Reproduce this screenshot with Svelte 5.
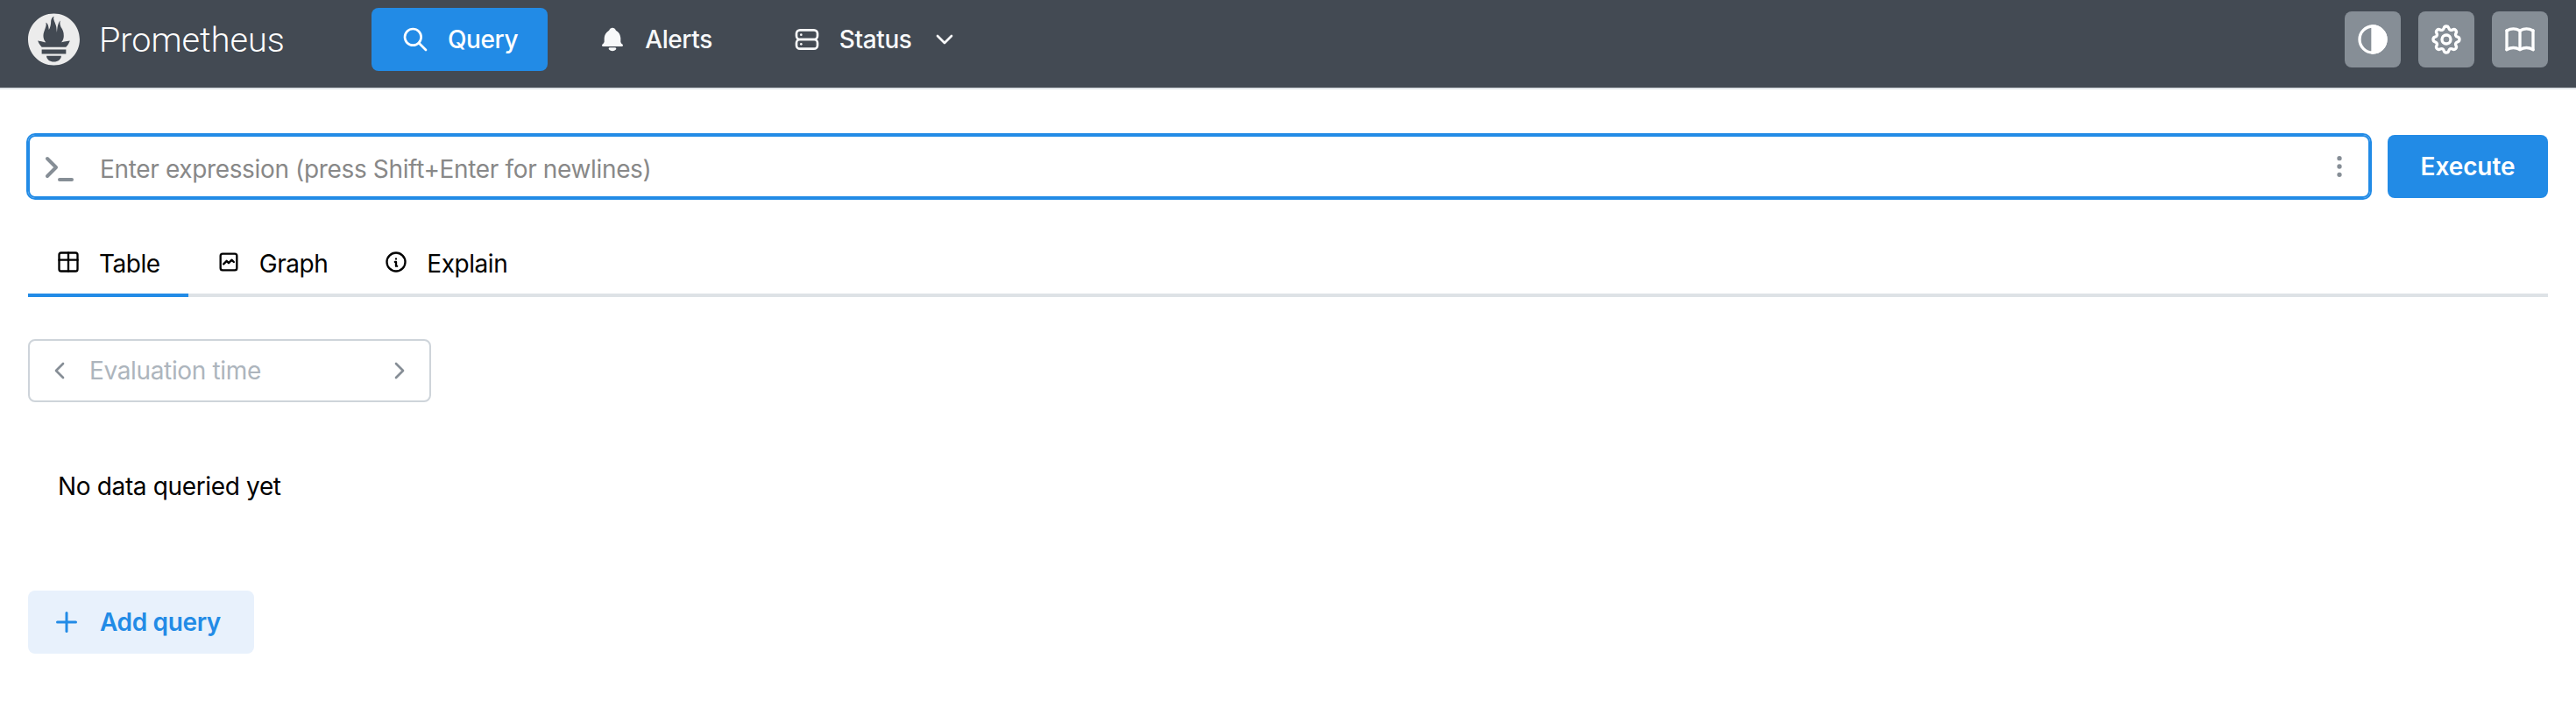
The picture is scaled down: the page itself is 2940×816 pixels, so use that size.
<script lang="ts">
    const tabs = [
        { label: 'Table', paths: ['M3 5a2 2 0 0 1 2 -2h14a2 2 0 0 1 2 2v14a2 2 0 0 1 -2 2h-14a2 2 0 0 1 -2 -2v-14z', 'M3 10h18', 'M12 3v18'] },
        { label: 'Graph', paths: ['M4 18v-12a2 2 0 0 1 2 -2h12a2 2 0 0 1 2 2v12a2 2 0 0 1 -2 2h-12a2 2 0 0 1 -2 -2z', 'M7 14l3 -3l2 2l3 -3l2 2'] },
        { label: 'Explain', paths: ['M3 12a9 9 0 1 0 18 0a9 9 0 0 0 -18 0', 'M12 9h.01', 'M11 12h1v4h1'] }
    ];
    const gear = 'M10.325 4.317c.426 -1.756 2.924 -1.756 3.35 0a1.724 1.724 0 0 0 2.573 1.066c1.543 -.94 3.31 .826 2.37 2.37a1.724 1.724 0 0 0 1.065 2.572c1.756 .426 1.756 2.924 0 3.35a1.724 1.724 0 0 0 -1.066 2.573c.94 1.543 -.826 3.31 -2.37 2.37a1.724 1.724 0 0 0 -2.572 1.065c-.426 1.756 -2.924 1.756 -3.35 0a1.724 1.724 0 0 0 -2.573 -1.066c-1.543 .94 -3.31 -.826 -2.37 -2.37a1.724 1.724 0 0 0 -1.065 -2.572c-1.756 -.426 -1.756 -2.924 0 -3.35a1.724 1.724 0 0 0 1.066 -2.573c-.94 -1.543 .826 -3.31 2.37 -2.37c1 .608 2.296 .07 2.572 -1.065z';
    const logo = 'M56.667.667C25.372.667 0 26.036 0 57.332c0 31.295 25.372 56.666 56.667 56.666s56.666-25.371 56.666-56.666C113.333 26.036 87.961.667 56.667.667zm0 106.055c-8.904 0-16.123-5.948-16.123-13.283H72.79c0 7.334-7.219 13.283-16.123 13.283zM83.297 89.04H30.034v-9.658h53.264v9.658zm-.191-14.629H30.186c-.176-.203-.356-.403-.526-.609-5.452-6.62-6.736-10.076-7.983-13.598-.021-.116 6.611 1.355 11.314 2.413 0 0 2.42.56 5.958 1.205-3.397-3.982-5.414-9.044-5.414-14.218 0-11.359 8.712-21.285 5.569-29.308 3.059.249 6.331 6.456 6.552 16.161 3.252-4.494 4.613-12.701 4.613-17.733 0-5.21 3.433-11.262 6.867-11.469-3.061 5.045.793 9.37 4.219 20.099 1.285 4.03 1.121 10.812 2.113 15.113.329-8.933 1.865-21.967 7.533-26.467-2.5 5.667.37 12.758 2.333 16.167 3.167 5.5 5.087 9.667 5.087 17.548 0 5.284-1.951 10.259-5.242 14.148 3.742-.702 6.326-1.335 6.326-1.335l12.152-2.371c.001-.001-1.765 7.261-8.55 14.254z';
</script>

{#snippet icon(paths: string[], size: number)}
    <svg class="icon" width={size} height={size} viewBox="0 0 24 24" fill="none" stroke="currentColor" stroke-width="2" stroke-linecap="round" stroke-linejoin="round">
        {#each paths as d}
            <path {d} />
        {/each}
    </svg>
{/snippet}

<header class="header">
    <div class="brand">
        <svg class="logo" width="60" height="60" viewBox="0 0 115.333 115"><path d={logo} fill="#ececec" /></svg>
        <span class="brand-name">Prometheus</span>
    </div>

    <nav class="nav">
        <button class="nav-item active">
            {@render icon(['M10 10m-7 0a7 7 0 1 0 14 0a7 7 0 1 0 -14 0', 'M21 21l-6 -6'], 32)}
            <span>Query</span>
        </button>
        <button class="nav-item">
            <svg class="icon" width="32" height="32" viewBox="0 0 24 24" fill="currentColor">
                <path d="M14.235 19c.865 0 1.322 1.024 .745 1.668a3.992 3.992 0 0 1 -2.98 1.332a3.992 3.992 0 0 1 -2.98 -1.332c-.552 -.616 -.158 -1.579 .634 -1.661l.11 -.006h4.471z" />
                <path d="M12 2c1.358 0 2.506 .903 2.875 2.141l.046 .171l.008 .043a8.013 8.013 0 0 1 4.024 6.069l.028 .287l.019 .289v2.931l.021 .136a3 3 0 0 0 1.143 1.847l.167 .117l.162 .099c.86 .487 .56 1.766 -.377 1.864l-.116 .006h-16c-1.028 0 -1.387 -1.364 -.493 -1.87a3 3 0 0 0 1.472 -2.063l.021 -.143l.001 -2.97a8 8 0 0 1 3.821 -6.454l.248 -.146l.01 -.043a3.003 3.003 0 0 1 2.562 -2.29l.182 -.017l.176 -.004z" />
            </svg>
            <span>Alerts</span>
        </button>
        <button class="nav-item">
            {@render icon(['M3 4m0 3a3 3 0 0 1 3 -3h12a3 3 0 0 1 3 3v2a3 3 0 0 1 -3 3h-12a3 3 0 0 1 -3 -3z', 'M3 12m0 3a3 3 0 0 1 3 -3h12a3 3 0 0 1 3 3v2a3 3 0 0 1 -3 3h-12a3 3 0 0 1 -3 -3z', 'M7 8l0 .01', 'M7 16l0 .01'], 32)}
            <span>Status</span>
            {@render icon(['M6 9l6 6l6 -6'], 32)}
        </button>
    </nav>

    <div class="actions">
        <button class="action">
            <svg class="icon" width="40" height="40" viewBox="0 0 24 24" fill="none" stroke="currentColor" stroke-width="2">
                <circle cx="12" cy="12" r="9" />
                <path d="M12 3a9 9 0 0 1 0 18z" fill="currentColor" />
            </svg>
        </button>
        <button class="action">{@render icon([gear, 'M9 12a3 3 0 1 0 6 0a3 3 0 0 0 -6 0'], 40)}</button>
        <button class="action">{@render icon(['M3 19a9 9 0 0 1 9 0a9 9 0 0 1 9 0', 'M3 6a9 9 0 0 1 9 0a9 9 0 0 1 9 0', 'M3 6l0 13', 'M12 6l0 13', 'M21 6l0 13'], 40)}</button>
    </div>
</header>

<main class="page">
    <div class="query-row">
        <div class="expr">
            <span class="expr-icon">{@render icon(['M5 7l5 5l-5 5', 'M12 19l7 0'], 48)}</span>
            <span class="expr-placeholder">Enter expression (press Shift+Enter for newlines)</span>
            <span class="expr-menu">{@render icon(['M12 12m-1 0a1 1 0 1 0 2 0a1 1 0 1 0 -2 0', 'M12 19m-1 0a1 1 0 1 0 2 0a1 1 0 1 0 -2 0', 'M12 5m-1 0a1 1 0 1 0 2 0a1 1 0 1 0 -2 0'], 32)}</span>
        </div>
        <button class="execute">Execute</button>
    </div>

    <div class="tabs">
        {#each tabs as tab, i}
            <div class="tab" class:selected={i === 0}>
                {@render icon(tab.paths, 28)}
                <span class="tab-label">{tab.label}</span>
            </div>
        {/each}
    </div>

    <div class="eval-time">
        <span class="eval-chevron">{@render icon(['M15 6l-6 6l6 6'], 32)}</span>
        <span class="eval-placeholder">Evaluation time</span>
        <span class="eval-chevron">{@render icon(['M9 6l6 6l-6 6'], 32)}</span>
    </div>

    <p class="empty">No data queried yet</p>

    <button class="add-query">
        {@render icon(['M12 5l0 14', 'M5 12l14 0'], 36)}
        <span>Add query</span>
    </button>
</main>

<style>
    :global(body)
    {
        margin: 0;
        background: #ffffff;
        font-family: Inter, "Liberation Sans", sans-serif;
        font-size: 28px;
        letter-spacing: -0.35px;
        color: #000000;
    }

    button
    {
        font: inherit;
        letter-spacing: inherit;
        border: none;
        cursor: pointer;
        padding: 0;
    }

    .icon
    {
        display: block;
        flex-shrink: 0;
    }

    .header
    {
        height: 102px;
        padding: 9px 32px 0;
        box-sizing: border-box;
        display: flex;
        align-items: flex-start;
        background: #434a53;
        border-bottom: 2px solid #dee2e6;
    }

    .brand
    {
        height: 72px;
        display: flex;
        align-items: center;
        gap: 21px;
        width: 392px;
        flex-shrink: 0;
    }

    .brand-name
    {
        color: #ffffff;
        font-family: Roboto, sans-serif;
        font-size: 39.6px;
        font-weight: 300;
        letter-spacing: 0;
    }

    .nav
    {
        display: flex;
        gap: 24px;
    }

    .nav-item
    {
        height: 72px;
        padding: 0 34px;
        display: flex;
        align-items: center;
        gap: 21px;
        background: transparent;
        color: #f8f9fa;
        border-radius: 8px;
        font-weight: 500;
        letter-spacing: -0.4px;
    }

    .nav-item.active
    {
        background: #228be6;
        color: #ffffff;
    }

    .actions
    {
        margin-left: auto;
        padding-top: 4px;
        display: flex;
        gap: 20px;
    }

    .action
    {
        width: 64px;
        height: 64px;
        display: flex;
        align-items: center;
        justify-content: center;
        background: #868e96;
        color: #ffffff;
        border-radius: 8px;
    }

    .page
    {
        padding: 52px 32px 0;
    }

    .query-row
    {
        display: flex;
        gap: 20px;
    }

    .expr
    {
        flex: 1;
        height: 72px;
        box-sizing: border-box;
        display: flex;
        align-items: center;
        border: 2px solid #228be6;
        border-radius: 8px;
        box-shadow: 0 0 0 2px #228be6;
    }

    .expr-icon
    {
        margin: 2px 0 0 10px;
        color: #868e96;
    }

    .expr-placeholder
    {
        margin-left: 22px;
        padding-top: 5px;
        flex: 1;
        color: #888888;
    }

    .expr-menu
    {
        margin-right: 17px;
        color: #868e96;
    }

    .execute
    {
        width: 183px;
        height: 72px;
        background: #228be6;
        color: #ffffff;
        font-weight: 600;
        letter-spacing: -0.1px;
        border-radius: 8px;
    }

    .tabs
    {
        margin-top: 37px;
        display: flex;
        border-bottom: 4px solid #dee2e6;
    }

    .tab
    {
        height: 76px;
        margin-bottom: -4px;
        padding: 0 32px;
        box-sizing: border-box;
        display: flex;
        align-items: center;
        gap: 21px;
        border-bottom: 4px solid transparent;
        letter-spacing: -0.45px;
    }

    .tab-label
    {
        padding-top: 3px;
    }

    .tab.selected
    {
        border-bottom-color: #228be6;
    }

    .eval-time
    {
        margin-top: 48px;
        width: 460px;
        height: 72px;
        box-sizing: border-box;
        padding: 0 18px;
        display: flex;
        align-items: center;
        gap: 18px;
        border: 2px solid #ced4da;
        border-radius: 8px;
    }

    .eval-chevron
    {
        color: #868e96;
    }

    .eval-placeholder
    {
        flex: 1;
        color: #adb5bd;
    }

    .empty
    {
        margin: 76px 0 0 34px;
        line-height: 40px;
    }

    .add-query
    {
        margin-top: 99px;
        height: 72px;
        padding: 0 38px 0 26px;
        display: flex;
        align-items: center;
        gap: 20px;
        background: #e8f1fc;
        color: #228be6;
        font-weight: 600;
        border-radius: 8px;
    }
</style>
